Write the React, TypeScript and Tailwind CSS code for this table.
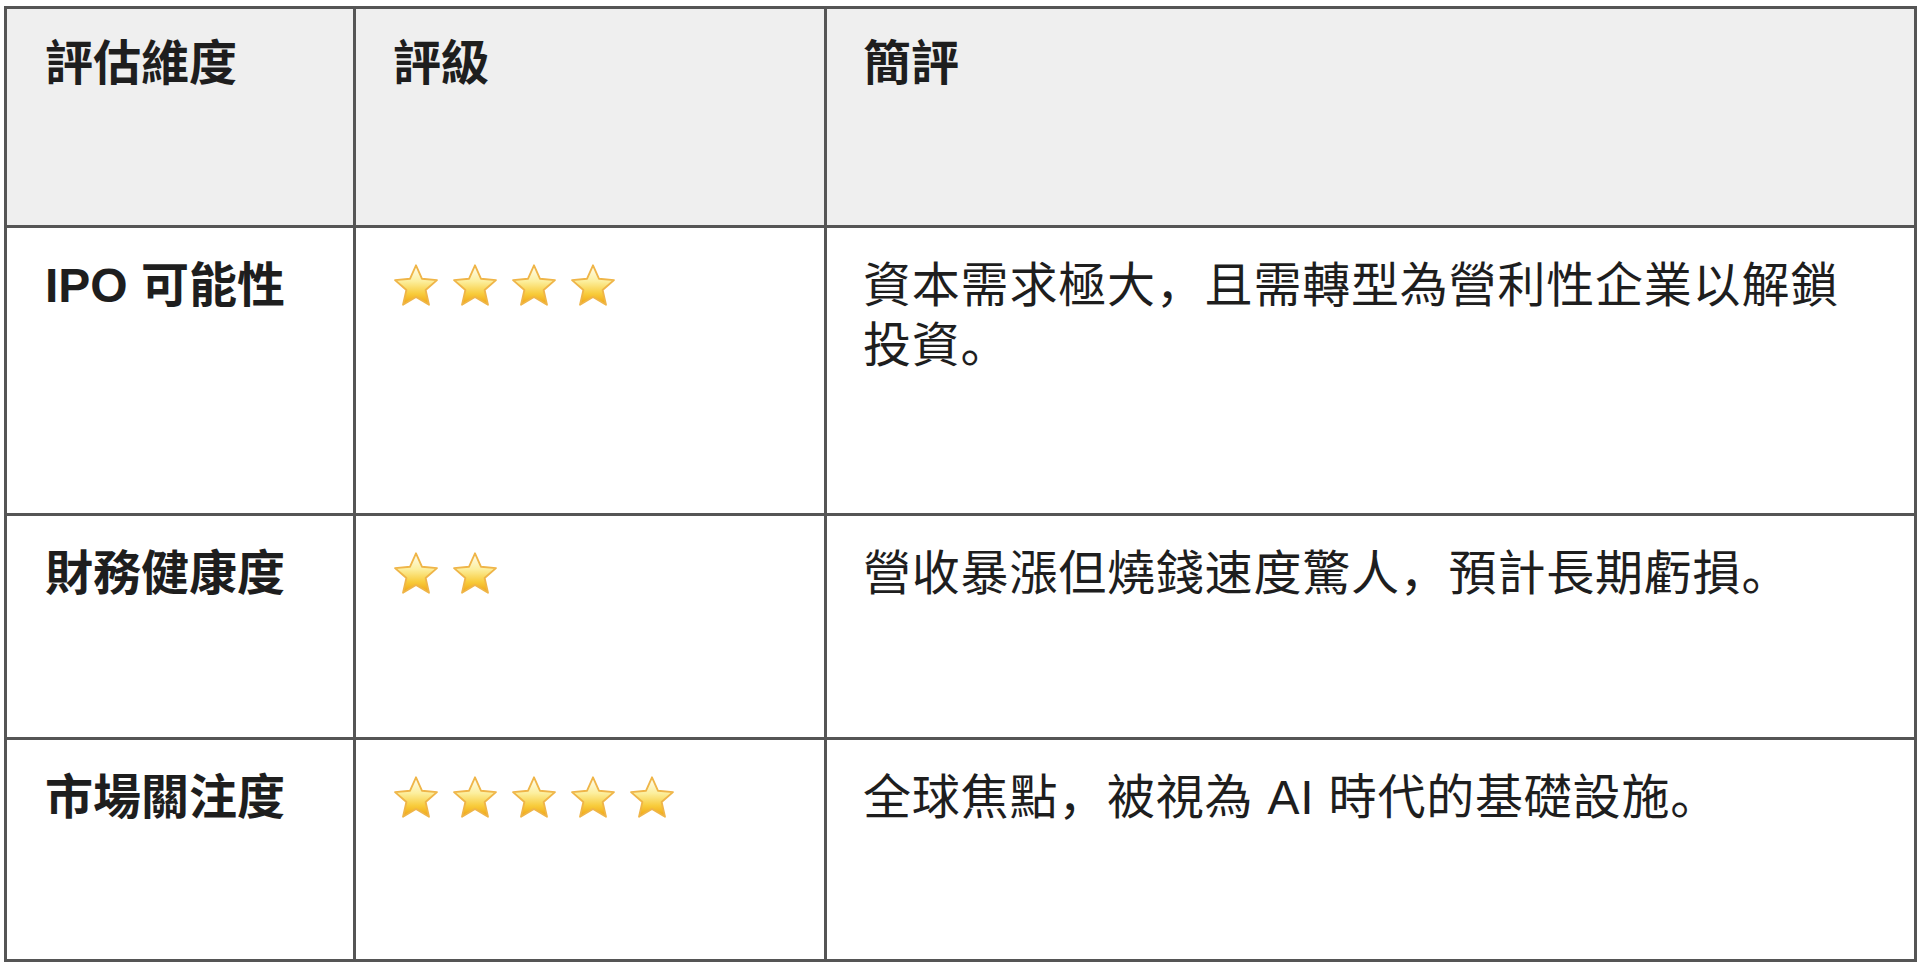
const rows = [
  {
    name: "IPO 可能性",
    stars: 4,
    note: "資本需求極大，且需轉型為營利性企業以解鎖投資。",
    height: "h-[288px]",
  },
  {
    name: "財務健康度",
    stars: 2,
    note: "營收暴漲但燒錢速度驚人，預計長期虧損。",
    height: "h-[224px]",
  },
  {
    name: "市場關注度",
    stars: 5,
    note: "全球焦點，被視為 AI 時代的基礎設施。",
    height: "h-[222px]",
  },
];

function Star() {
  return (
    <svg viewBox="0 0 100 100" className="h-[46px] w-[46px]">
      <defs>
        <linearGradient id="starFill" x1="0" y1="0" x2="0" y2="1">
          <stop offset="0%" stopColor="#fffdf2" />
          <stop offset="40%" stopColor="#fcef9e" />
          <stop offset="72%" stopColor="#f8cc3c" />
          <stop offset="100%" stopColor="#f0a312" />
        </linearGradient>
      </defs>
      <polygon
        points="50,5 62.9,34.2 95.6,37.2 70.9,58.8 78.2,90.8 50,74 21.8,90.8 29.1,58.8 4.4,37.2 37.1,34.2"
        fill="url(#starFill)"
        stroke="#efb548"
        strokeWidth="4"
        strokeLinejoin="round"
      />
    </svg>
  );
}

function Stars({ count }: { count: number }) {
  return (
    <div className="flex h-[60px] items-center gap-[13px]">
      {Array.from({ length: count }).map((_, i) => (
        <Star key={i} />
      ))}
    </div>
  );
}

export default function App() {
  const cell = "border-r-[3px] border-b-[3px] border-[#555555]";
  const font = {
    fontFamily: '"Liberation Sans", "Noto Sans CJK SC", sans-serif',
  };

  return (
    <div className="min-h-screen bg-white pl-[4px] pt-[6px]" style={font}>
      <div className="grid w-[1913px] grid-cols-[349px_471px_1090px] border-t-[3px] border-l-[3px] border-[#555555] text-[48px] leading-[60px] text-[#1e1e1e] [text-spacing-trim:space-all]">
        <div className={`${cell} h-[219px] bg-[#efefef] pt-[25px] pl-[38px] font-bold`}>
          評估維度
        </div>
        <div className={`${cell} h-[219px] bg-[#efefef] pt-[25px] pl-[37px] font-bold`}>
          評級
        </div>
        <div className={`${cell} h-[219px] bg-[#efefef] pt-[25px] pl-[36px] font-bold`}>
          簡評
        </div>

        {rows.map((row) => (
          <div key={row.name} className="contents">
            <div className={`${cell} ${row.height} pt-[28px] pl-[38px] font-bold`}>
              {row.name}
            </div>
            <div className={`${cell} ${row.height} pt-[28px] pl-[37px]`}>
              <Stars count={row.stars} />
            </div>
            <div className={`${cell} ${row.height} pt-[28px] pr-[40px] pl-[36px] tracking-[0.8px]`}>
              {row.note}
            </div>
          </div>
        ))}
      </div>
    </div>
  );
}
